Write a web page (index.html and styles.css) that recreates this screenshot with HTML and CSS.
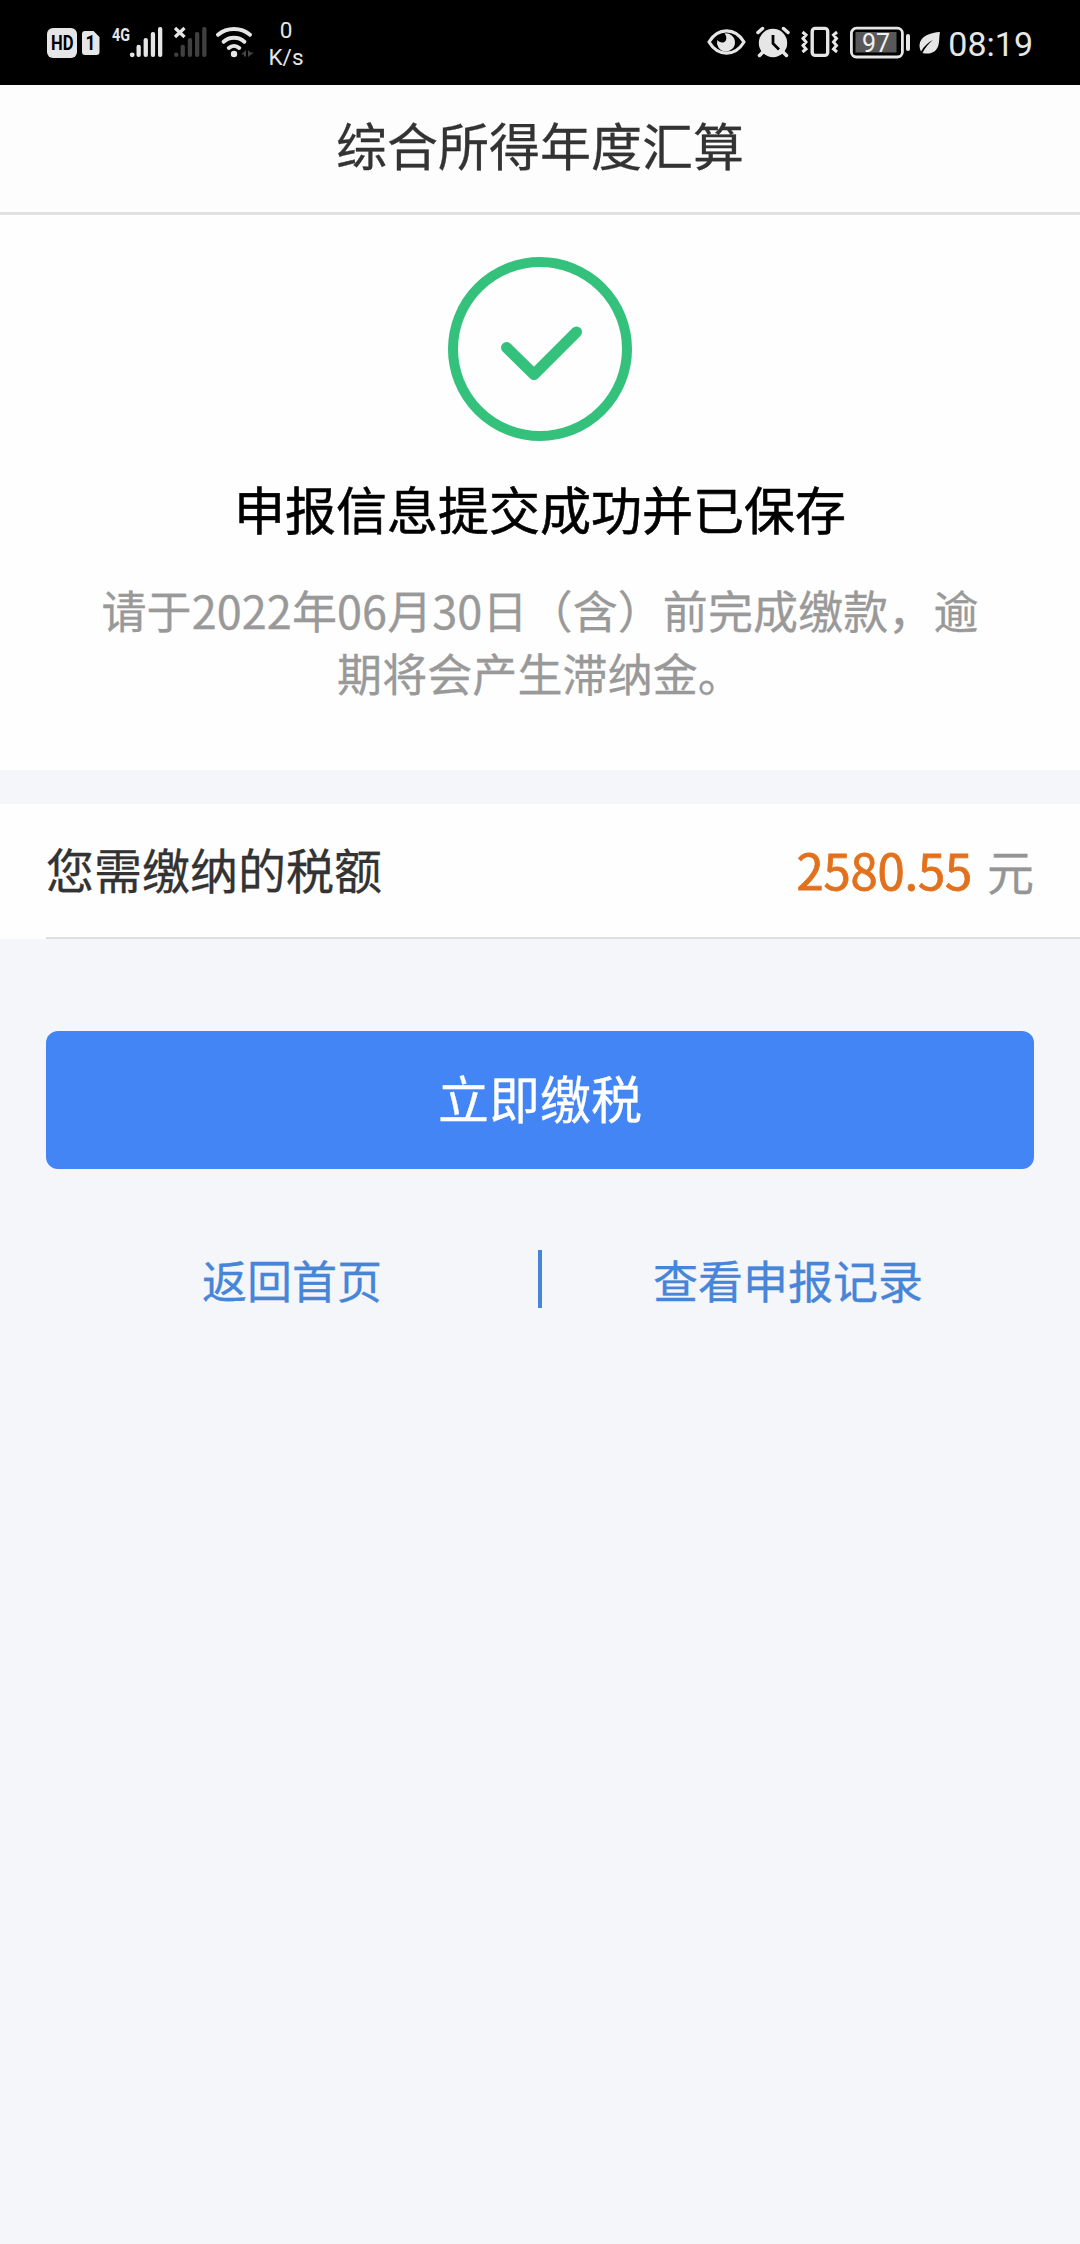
FILE: index.html
```html
<!DOCTYPE html>
<html lang="zh-CN">
<head>
    <meta charset="UTF-8">
    <meta name="viewport" content="width=device-width, initial-scale=1.0">
    <title>综合所得年度汇算</title>
    <link rel="stylesheet" href="styles.css">
</head>
<body>
    <!-- 状态栏 -->
    <div class="status-bar">
        <div class="status-left">
            <svg class="icon-hd" width="30" height="34" viewBox="0 0 30 34">
                <rect y="2" width="30" height="30" rx="6" fill="#e6e6e6"/>
                <text x="4" y="24" font-size="19.5" font-weight="700" textLength="22.5" lengthAdjust="spacingAndGlyphs" fill="#000">HD</text>
            </svg>
            <svg class="icon-sim" width="18" height="34" viewBox="0 0 18 34">
                <path d="M3 5h8.5L17.5 11v15a3 3 0 0 1-3 3H3a3 3 0 0 1-3-3V8a3 3 0 0 1 3-3z" fill="#e6e6e6"/>
                <text x="3.5" y="24" font-size="20" font-weight="700" fill="#000" textLength="10" lengthAdjust="spacingAndGlyphs">1</text>
            </svg>
            <svg class="icon-signal" width="51" height="34" viewBox="0 0 51 34" fill="#e6e6e6">
                <text x="0" y="14.6" font-size="18.5" font-weight="700" textLength="18" lengthAdjust="spacingAndGlyphs">4G</text>
                <circle cx="20.2" cy="28.8" r="2.4"/>
                <rect x="24.5" y="18.7" width="4.3" height="12.3" rx="2"/>
                <rect x="31.6" y="12" width="4.3" height="19" rx="2"/>
                <rect x="38.8" y="6" width="4.3" height="25" rx="2"/>
                <rect x="46" y="1" width="4.3" height="30" rx="2"/>
            </svg>
            <svg class="icon-nosignal" width="33" height="34" viewBox="0 0 33 34" fill="#404040">
                <path d="M1 2l9.5 9M10.5 2L1 11" stroke="#e6e6e6" stroke-width="3.2"/>
                <circle cx="2.2" cy="28.8" r="2.2"/>
                <rect x="6.6" y="18.7" width="4.3" height="12.3" rx="2"/>
                <rect x="13.8" y="12" width="4.3" height="19" rx="2"/>
                <rect x="21" y="6" width="4.3" height="25" rx="2"/>
                <rect x="28.2" y="1" width="4.3" height="30" rx="2"/>
            </svg>
            <svg class="icon-wifi" width="39" height="34" viewBox="0 0 39 34" fill="none" stroke="#e6e6e6" stroke-width="4" stroke-linecap="round">
                <path d="M2 8.8C11 1 25 1 34 8.8"/>
                <path d="M7.6 15.8c6-5.3 14.8-5.3 20.8 0"/>
                <path d="M12.8 22c3-2.7 7.4-2.7 10.4 0"/>
                <circle cx="18" cy="28" r="3.2" fill="#e6e6e6" stroke="none"/>
                <path d="M25 28.5l5-4.5v6.5h-2v-2zM32 24v7l6-4.5h-3.5z" fill="#444" stroke="none"/>
            </svg>
            <div class="net-speed">0<br>K/s</div>
        </div>
        <div class="status-right">
            <svg class="icon-eye" width="39" height="34" viewBox="0 0 39 34">
                <path d="M2 16C11 1.2 28 1.2 37 16 28 30.8 11 30.8 2 16z" fill="none" stroke="#e6e6e6" stroke-width="3.2" stroke-linejoin="round"/>
                <path d="M17.5 7.5A9 9 0 1 1 10.3 14c2 3 7 3.5 8.5.5 1.2-2.5.4-5-1.3-7z" fill="#e6e6e6"/>
            </svg>
            <svg class="icon-alarm" width="34" height="34" viewBox="0 0 34 34">
                <circle cx="17" cy="17" r="14.2" fill="#e6e6e6"/>
                <path d="M2 6.5l4.5-4M32 6.5l-4.5-4M7 26l-3.5 3.5M27 26l3.5 3.5" stroke="#e6e6e6" stroke-width="3.5" stroke-linecap="round"/>
                <path d="M17 9v8.5l6 6" fill="none" stroke="#000" stroke-width="2.8"/>
            </svg>
            <svg class="icon-vibrate" width="38" height="34" viewBox="0 0 38 34" fill="none" stroke="#e6e6e6">
                <rect x="11.2" y="2.4" width="15.5" height="27" rx="3" stroke-width="3.4"/>
                <path d="M1.5 6l3.5 3-3 3.5 3 3.5-3 3.5 3 3.5-3.5 3M36 6l-3.5 3 3 3.5-3 3.5 3 3.5-3 3.5 3.5 3" stroke-width="3"/>
            </svg>
            <svg class="icon-battery" width="61" height="34" viewBox="0 0 61 34">
                <rect x="1.4" y="2.2" width="51" height="28.8" rx="5" fill="none" stroke="#e6e6e6" stroke-width="2.8"/>
                <rect x="5.5" y="6" width="41" height="20.5" fill="#585858"/>
                <rect x="56" y="8" width="4" height="17" rx="2" fill="#e6e6e6"/>
                <text x="12" y="25.5" font-size="26" textLength="28" lengthAdjust="spacingAndGlyphs" fill="#f0f0f0">97</text>
            </svg>
            <svg class="icon-leaf" width="22" height="34" viewBox="0 0 22 34">
                <path d="M21 6C12 6.5 1 10 .5 19c0 2.500.5 4.500 1.500 6.500C5 20 9 16.500 14 14 9.500 17.500 6 22 3.500 27c8 2 14-1 16-8 1-4 .5-8 1.500-13z" fill="#e6e6e6"/>
            </svg>
            <span class="clock">08:19</span>
        </div>
    </div>

    <header class="header">
        <h1>综合所得年度汇算</h1>
    </header>

    <!-- 提交结果 -->
    <section class="result">
        <svg class="result-icon" width="184" height="184" viewBox="0 0 184 184" fill="none" stroke="#34c17b">
            <circle cx="92" cy="92" r="87" stroke-width="10"/>
            <path d="M58.5 90.5l27.5 27L128.500 75" stroke-width="11" stroke-linecap="round" stroke-linejoin="round"/>
        </svg>
        <h2>申报信息提交成功并已保存</h2>
        <p>请于2022年06月30日（含）前完成缴款，逾期将会产生滞纳金。</p>
    </section>

    <!-- 应缴税额 -->
    <section class="tax-row">
        <div class="tax-inner">
            <span class="tax-label">您需缴纳的税额</span>
            <span class="tax-value"><span class="amount">2580.55</span><span class="unit">元</span></span>
        </div>
    </section>

    <div class="actions">
        <button class="pay-btn" type="button">立即缴税</button>
        <nav class="links">
            <a href="#">返回首页</a>
            <span class="divider"></span>
            <a href="#">查看申报记录</a>
        </nav>
    </div>
</body>
</html>
```
FILE: styles.css
```css
* { box-sizing: border-box; }
body { margin: 0; min-height: 2244px; background-color: #f4f6fa; font-family: "Noto Sans CJK SC", sans-serif; color: #333; }
h1, h2, p { margin: 0; font-weight: 400; }
svg { display: block; flex: none; overflow: visible; }

/* 状态栏 */
.status-bar { display: flex; justify-content: space-between; height: 85px; padding: 0 47px; background-color: #000; color: #e6e6e6; font-family: Roboto, sans-serif; }
.status-left, .status-right { display: flex; align-items: flex-start; padding-top: 26px; }
.icon-sim { margin-left: 5px; }
.icon-signal { margin-left: 12px; }
.icon-nosignal { margin-left: 11px; }
.icon-wifi { margin-left: 9px; }
.net-speed { width: 36px; margin: -9px 0 0 13px; font-size: 22.5px; line-height: 27px; text-align: center; }
.icon-alarm { margin-left: 10px; }
.icon-vibrate { margin-left: 11px; }
.icon-battery { margin-left: 11px; }
.icon-leaf { margin-left: 8px; }
.clock { margin-left: 7px; font-size: 34px; line-height: 36px; }

.header { height: 130px; border-bottom: 3px solid #e1e1e1; background-color: #fdfdfd; text-align: center; }
.header h1 { font-size: 51px; line-height: 119px; -webkit-text-stroke: 0.3px; }

/* 提交结果 */
.result { display: flex; flex-direction: column; align-items: center; height: 555px; padding-top: 42px; background-color: #fefefe; text-align: center; }
.result h2 { margin-top: 29px; font-size: 51px; line-height: 76px; color: #000; -webkit-text-stroke: 0.6px; }
.result p { width: 900px; margin-top: 32px; font-size: 45px; line-height: 63px; letter-spacing: 0.1px; color: #999; -webkit-text-stroke: 0.3px; }

/* 应缴税额 */
.tax-row { height: 135px; margin-top: 34px; padding-left: 46px; background-color: #fefefe; }
.tax-inner { display: flex; justify-content: space-between; align-items: center; height: 135px; padding: 0 46px 5px 0; border-bottom: 2px solid #dedee0; }
.tax-label { font-size: 48px; -webkit-text-stroke: 0.3px; }
.tax-value { display: flex; align-items: baseline; gap: 15px; }
.amount { font-size: 49px; letter-spacing: -0.2px; color: #e2711d; -webkit-text-stroke: 0.8px; }
.unit { font-size: 47px; color: #959595; -webkit-text-stroke: 0.3px; }

.actions { padding: 92px 46px 0; }
.pay-btn { display: block; width: 100%; height: 138px; padding: 0 0 6px; border: none; border-radius: 12px; background-color: #4385f4; color: #fff; font-family: inherit; font-size: 51px; cursor: pointer; -webkit-text-stroke: 0.3px; }
.links { display: flex; align-items: center; height: 58px; margin-top: 81px; }
.links a { flex: 1; padding-top: 2px; font-size: 45px; line-height: 58px; color: #4785d8; text-align: center; text-decoration: none; -webkit-text-stroke: 0.3px; }
.divider { width: 4px; height: 58px; background-color: #4785d8; }
```
